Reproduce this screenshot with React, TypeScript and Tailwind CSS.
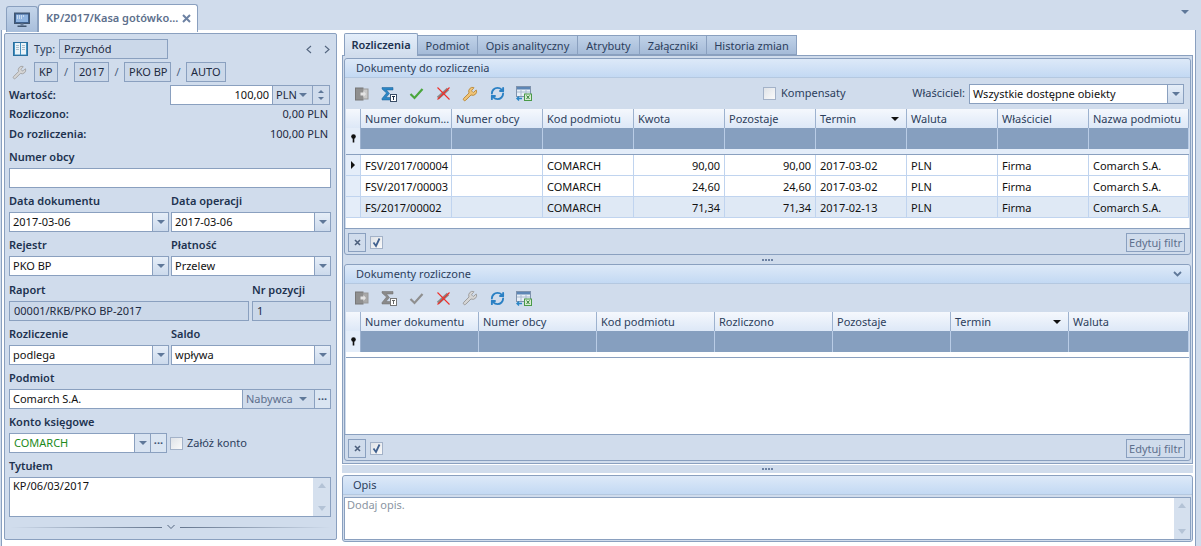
import React from 'react';
import { RefreshCw, Wrench } from 'lucide-react';

const Caret = ({ className = 'border-t-[#5f7899]' }: { className?: string }) => (
  <span className={`inline-block w-0 h-0 border-x-[4px] border-x-transparent border-t-[4px] ${className}`} />
);

const Label = ({ children, className = 'h-[24px] pt-[3px]' }: { children: React.ReactNode; className?: string }) => (
  <div className={`leading-[20px] font-semibold text-[#20324f] ${className}`}>{children}</div>
);

const RO = ({ children, className = '' }: { children: React.ReactNode; className?: string }) => (
  <div className={`h-[20px] border border-[#8aa0bf] px-[4px] leading-[18px] bg-[#cbd8e9] whitespace-nowrap ${className}`}>{children}</div>
);

const Combo = ({ value, className = '' }: { value: string; className?: string }) => (
  <div className={`h-[20px] flex border border-[#8aa0bf] bg-white ${className}`}>
    <div className="flex-1 px-[3px] leading-[18px] text-[#111]">{value}</div>
    <div className="w-[16px] border-l border-[#8aa0bf] bg-gradient-to-b from-[#e6eef8] to-[#ccdaec] flex items-center justify-center">
      <Caret />
    </div>
  </div>
);

const Dots = () => (
  <div className="flex gap-[1px] items-center justify-center">
    <span className="w-[2px] h-[2px] bg-[#6d82a3]" />
    <span className="w-[2px] h-[2px] bg-[#6d82a3]" />
    <span className="w-[2px] h-[2px] bg-[#6d82a3]" />
    <span className="w-[2px] h-[2px] bg-[#6d82a3]" />
  </div>
);

const Checkbox = ({ checked = false, className = '' }: { checked?: boolean; className?: string }) => (
  <span className={`w-[13px] h-[13px] border border-[#a3b2c8] bg-gradient-to-br from-[#dfe3e8] to-[#fafafa] flex items-center justify-center ${className}`}>
    {checked && (
      <svg width="11" height="11" viewBox="0 0 11 11">
        <path d="M2.5 5.5 L5 9 L8.5 1.5" fill="none" stroke="#41618f" strokeWidth="1.8" />
      </svg>
    )}
  </span>
);

const Monitor = () => (
  <svg width="16" height="16" viewBox="0 0 16 16">
    <rect x="0.5" y="1" width="15" height="10.5" fill="#3d5f8c" stroke="#42566f" />
    <rect x="2" y="2.5" width="12" height="7.5" fill="#8fb4e0" />
    <path d="M3 4h1M5 4h1M7 4h1M9 4h1M3 6h1M5 6h1M7 6h1" stroke="#fff" />
    <rect x="6.5" y="11.5" width="3" height="2" fill="#6a7f9c" />
    <rect x="3.5" y="13.5" width="9" height="1.5" fill="#42566f" />
  </svg>
);

const Book = () => (
  <svg width="15" height="14" viewBox="0 0 15 14">
    <rect x="0.5" y="0.5" width="14" height="13" fill="#3f8fc0" stroke="#2a6f9e" />
    <rect x="2" y="1" width="5" height="11.5" fill="#eaf3f8" />
    <rect x="8" y="1" width="5" height="11.5" fill="#eaf3f8" />
    <path d="M3 3.5h3M3 5.5h3M3 7.5h3M9 3.5h3M9 5.5h3M9 7.5h3" stroke="#a9bccb" />
  </svg>
);

const IconDoor = ({ off = false }: { off?: boolean }) => (
  <svg width="14" height="14" viewBox="0 0 14 14">
    <rect x="0.5" y="1" width="7.5" height="12" fill="#8f8f8f" stroke="#777" />
    <rect x="8" y="2" width="5" height="10" fill={off ? '#a9a9a9' : '#c9c9c9'} stroke="#999" />
    <path d="M5.5 5.5h3V4l2.5 3-2.5 3V8.5h-3z" fill="#e4e4e4" />
  </svg>
);

const IconSigma = ({ off = false }: { off?: boolean }) => (
  <svg width="16" height="16" viewBox="0 0 16 16">
    <path d="M1 1.5h11v2.5H5.5L8.5 7.5l-3.5 4h7v2.5H1v-1.5l4.5-5.5L1 3z" fill={off ? '#8a8a8a' : '#2b86c5'} stroke={off ? '#6e6e6e' : '#1c5f94'} strokeWidth="0.5" />
    <rect x="9.5" y="8.5" width="6" height="7" fill="#fff" stroke={off ? '#777' : '#3a4d66'} />
    <path d="M11 10.5h3M12.5 10.5v3.5" stroke={off ? '#666' : '#1c2f4a'} />
  </svg>
);

const IconCheck = ({ off = false }: { off?: boolean }) => (
  <svg width="15" height="13" viewBox="0 0 15 13">
    <path d="M1.5 7 L5.5 11 L13.5 2" fill="none" stroke={off ? '#8f8f8f' : '#4aa63c'} strokeWidth="2.2" />
  </svg>
);

const IconCross = () => (
  <svg width="15" height="15" viewBox="0 0 15 15">
    <path d="M2 12 L12 3" stroke="#8a8a8a" strokeWidth="3.4" />
    <path d="M1.5 1.5 L13.5 13.5 M13.5 1.5 L1.5 13.5" stroke="#ef2f2a" strokeWidth="1.1" />
  </svg>
);

const IconTable = () => (
  <svg width="16" height="15" viewBox="0 0 16 15">
    <rect x="0.5" y="0.5" width="14" height="10" fill="#e8eff7" stroke="#7f93ad" />
    <rect x="1" y="1" width="13" height="2.5" fill="#5d86b5" />
    <path d="M1 6h13M5 3v7M10 3v7" stroke="#a9bbd0" />
    <path d="M1 12.5h5M3 10.5l-2 2 2 2" fill="none" stroke="#2b86c5" strokeWidth="1.4" />
    <rect x="8.5" y="8" width="7" height="6.5" fill="#d7ecd2" stroke="#4a9a48" />
    <path d="M10.5 9.5l3 3.5M13.5 9.5l-3 3.5" stroke="#2e7d32" />
  </svg>
);

const Toolbar = ({ off = false, className = 'h-[31px]' }: { off?: boolean; className?: string }) => (
  <div className={`flex items-center gap-[11px] pl-[9px] shrink-0 ${className}`}>
    <span className="w-[16px] flex justify-center"><IconDoor off={off} /></span>
    <span className="w-[16px] flex justify-center"><IconSigma off={off} /></span>
    <span className="w-[16px] flex justify-center"><IconCheck off={off} /></span>
    <span className="w-[16px] flex justify-center"><IconCross /></span>
    <span className="w-[16px] flex justify-center">
      <Wrench size={16} strokeWidth={1.4} className={off ? 'text-[#9a9a9a] fill-[#d5d5d5]' : 'text-[#b98a3c] fill-[#efc376]'} />
    </span>
    <span className="w-[16px] flex justify-center">
      <RefreshCw size={15} strokeWidth={3} className="text-[#2a80c4]" />
    </span>
    <span className="w-[16px] flex justify-center"><IconTable /></span>
  </div>
);

const PanelHead = ({ title, chevron = false, className = 'pl-[11px]' }: { title: string; chevron?: boolean; className?: string }) => (
  <div className={`h-[19px] shrink-0 flex items-center justify-between pr-[8px] bg-gradient-to-b from-[#dde9f8] to-[#c3d9f3] border-b border-[#b4c8e0] rounded-t-[3px] text-[#2c3e5c] ${className}`}>
    <span>{title}</span>
    {chevron && (
      <svg width="9" height="7" viewBox="0 0 9 7">
        <path d="M1 1 L4.5 4.5 L8 1" fill="none" stroke="#5f7899" strokeWidth="1.8" />
      </svg>
    )}
  </div>
);

const Cell = ({ children, right = false, className = '' }: { children?: React.ReactNode; right?: boolean; className?: string }) => (
  <div className={`border-r border-b border-[#c0d4ef] px-[4px] leading-[21px] whitespace-nowrap overflow-hidden text-[#111] ${right ? 'text-right' : ''} ${className}`}>
    {children}
  </div>
);

const HeadCell = ({ children, sort = false }: { children?: React.ReactNode; sort?: boolean }) => (
  <div className="h-[19px] border-r border-[#9db2cf] px-[4px] leading-[18px] flex items-center justify-between text-[#2c3e5c] bg-gradient-to-b from-[#f5f8fd] to-[#dde8f7]">
    <span className="whitespace-nowrap">{children}</span>
    {sort && <Caret className="border-t-[#111] mr-[3px]" />}
  </div>
);

const FilterRow = ({ cols, className }: { cols: number; className: string }) => (
  <div className={`grid ${className} h-[21px] shrink-0`}>
    <div className="bg-[#e4edf9] border-r border-[#9db2cf] flex items-center justify-center">
      <svg width="7" height="9" viewBox="0 0 7 9">
        <circle cx="3.5" cy="2.5" r="2.3" fill="#111" />
        <rect x="2.7" y="3.5" width="1.6" height="5" fill="#111" />
      </svg>
    </div>
    {Array.from({ length: cols }).map((_, i) => (
      <div key={i} className="bg-[#869fbf] border-r border-[#b9cce6]" />
    ))}
  </div>
);

const GridFooter = () => (
  <div className="h-[26px] shrink-0 border-t border-[#8aa0bf] flex items-center justify-between pt-[1px] pl-[3px] pr-[5px]">
    <div className="flex items-center gap-[4px]">
      <div className="w-[18px] h-[19px] border border-[#8aa0bf] flex items-center justify-center">
        <svg width="7" height="7" viewBox="0 0 7 7">
          <path d="M1 1 L6 6 M6 1 L1 6" stroke="#4c5f7c" strokeWidth="1.6" />
        </svg>
      </div>
      <Checkbox checked />
    </div>
    <div className="h-[19px] w-[59px] border border-[#8aa0bf] text-center leading-[17px] text-[#5d6f8c] whitespace-nowrap">Edytuj filtr</div>
  </div>
);

const topCols = 'grid-cols-[15px_91px_91px_91px_91px_91px_91px_91px_91px_100px]';
const botCols = 'grid-cols-[15px_118px_118px_118px_118px_118px_118px_120px]';

const rows = [
  { doc: 'FSV/2017/00004', kw: '90,00', term: '2017-03-02', arrow: true, bg: 'bg-white' },
  { doc: 'FSV/2017/00003', kw: '24,60', term: '2017-03-02', arrow: false, bg: 'bg-white' },
  { doc: 'FS/2017/00002', kw: '71,34', term: '2017-02-13', arrow: false, bg: 'bg-[#dfe9f5]' },
];

const LeftPanel = () => (
  <div className="w-[333px] h-[507px] mt-[3px] ml-[1px] border border-[#8aa0bf] rounded-[2px] bg-[#d0dcec] px-[4px] text-[#1d2a3f]">
    <div className="h-[20px] mt-[5px] flex items-center">
      <span className="ml-[4px] w-[21px]"><Book /></span>
      <span className="text-[#2c3e5c] w-[25px]">Typ:</span>
      <RO className="w-[109px]">Przychód</RO>
      <div className="ml-auto mr-[2px] flex gap-[12px] items-center">
        <svg width="6" height="9" viewBox="0 0 6 9"><path d="M5 1 L1 4.5 L5 8" fill="none" stroke="#53657f" strokeWidth="1.1" /></svg>
        <svg width="6" height="9" viewBox="0 0 6 9"><path d="M1 1 L5 4.5 L1 8" fill="none" stroke="#53657f" strokeWidth="1.1" /></svg>
      </div>
    </div>
    <div className="h-[20px] mt-[3px] flex items-center">
      <span className="ml-[3px] w-[22px]">
        <Wrench size={15} strokeWidth={1.3} className="text-[#9a9a9a] fill-[#d5d5d5]" />
      </span>
      <RO className="w-[24px]">KP</RO>
      <span className="w-[16px] text-center text-[#4c5f7c]">/</span>
      <RO className="w-[35px]">2017</RO>
      <span className="w-[15px] text-center text-[#4c5f7c]">/</span>
      <RO className="w-[47px]">PKO BP</RO>
      <span className="w-[15px] text-center text-[#4c5f7c]">/</span>
      <RO className="w-[40px]">AUTO</RO>
    </div>
    <div className="h-[20px] mt-[3px] flex items-center">
      <span className="font-semibold text-[#20324f]">Wartość:</span>
      <div className="ml-auto mr-[2px] h-[20px] w-[160px] flex border border-[#8aa0bf] bg-white">
        <div className="w-[102px] text-right pr-[3px] leading-[18px] text-[#111] border-r border-[#8aa0bf]">100,00</div>
        <div className="flex-1 flex items-center justify-between pl-[3px] pr-[5px] bg-[#d0dcec] text-[#1d2a3f] border-r border-[#8aa0bf]">
          PLN <Caret />
        </div>
        <div className="w-[16px] bg-[#d0dcec] flex flex-col items-center justify-center gap-[4px]">
          <span className="w-0 h-0 border-x-[3px] border-x-transparent border-b-[3px] border-b-[#5f7899]" />
          <span className="w-0 h-0 border-x-[3px] border-x-transparent border-t-[3px] border-t-[#5f7899]" />
        </div>
      </div>
    </div>
    <div className="h-[19px] flex items-center justify-between pr-[4px]">
      <span className="font-semibold text-[#20324f]">Rozliczono:</span><span>0,00 PLN</span>
    </div>
    <div className="h-[20px] flex items-center justify-between pr-[4px]">
      <span className="font-semibold text-[#20324f]">Do rozliczenia:</span><span>100,00 PLN</span>
    </div>

    <Label>Numer obcy</Label>
    <div className="h-[20px] w-[322px] border border-[#8aa0bf] bg-white" />

    <div className="grid grid-cols-[160px_160px] gap-x-[2px]">
      <div><Label>Data dokumentu</Label><Combo value="2017-03-06" /></div>
      <div><Label>Data operacji</Label><Combo value="2017-03-06" /></div>
      <div><Label>Rejestr</Label><Combo value="PKO BP" /></div>
      <div><Label>Płatność</Label><Combo value="Przelew" /></div>
    </div>
    <div className="grid grid-cols-[240px_79px] gap-x-[3px]">
      <div><Label className="h-[25px] pt-[4px]">Raport</Label><RO className="px-[3px]">00001/RKB/PKO BP-2017</RO></div>
      <div><Label className="h-[25px] pt-[4px]">Nr pozycji</Label><RO className="px-[3px]">1</RO></div>
    </div>
    <div className="grid grid-cols-[160px_160px] gap-x-[2px]">
      <div><Label>Rozliczenie</Label><Combo value="podlega" /></div>
      <div><Label>Saldo</Label><Combo value="wpływa" /></div>
    </div>

    <Label>Podmiot</Label>
    <div className="h-[20px] flex border border-[#8aa0bf] bg-white w-[322px]">
      <div className="w-[232px] px-[3px] leading-[18px] text-[#111]">Comarch S.A.</div>
      <div className="w-[72px] border-l border-[#8aa0bf] bg-[#d0dcec] flex items-center justify-between pl-[3px] pr-[7px] text-[#5d6f8c]">
        Nabywca <Caret />
      </div>
      <div className="flex-1 border-l border-[#8aa0bf] bg-[#dae5f2] text-center leading-[12px] font-bold text-[#3f5272]">...</div>
    </div>

    <Label>Konto księgowe</Label>
    <div className="h-[20px] flex items-center">
      <div className="w-[158px] h-[20px] flex border border-[#8aa0bf] bg-white">
        <div className="flex-1 px-[4px] leading-[18px] text-[#1c8a1c]">COMARCH</div>
        <div className="w-[16px] border-l border-[#8aa0bf] bg-[#d8e3f1] flex items-center justify-center"><Caret /></div>
        <div className="w-[16px] border-l border-[#8aa0bf] bg-[#dae5f2] text-center leading-[12px] font-bold text-[#3f5272]">...</div>
      </div>
      <Checkbox className="ml-[3px]" />
      <span className="ml-[4px] text-[#2c3e5c]">Załóż konto</span>
    </div>

    <Label>Tytułem</Label>
    <div className="h-[40px] flex border border-[#8aa0bf] bg-white w-[322px]">
      <div className="flex-1 px-[3px] leading-[16px] text-[#111]">KP/06/03/2017</div>
      <div className="w-[17px] bg-[#d5e0ee] flex flex-col items-center justify-between py-[5px]">
        <span className="w-0 h-0 border-x-[4px] border-x-transparent border-b-[5px] border-b-[#b4c3d6]" />
        <span className="w-0 h-0 border-x-[4px] border-x-transparent border-t-[5px] border-t-[#b4c3d6]" />
      </div>
    </div>

    <div className="mt-[7px] flex items-center gap-[5px] pl-[1px] pr-[1px]">
      <div className="flex-1 h-[1px] bg-gradient-to-r from-[#d0dcec] to-[#66778f]" />
      <svg width="8" height="6" viewBox="0 0 8 6"><path d="M0.5 1 L4 4.5 L7.5 1" fill="none" stroke="#53657f" /></svg>
      <div className="flex-1 h-[1px] bg-gradient-to-r from-[#66778f] to-[#d0dcec]" />
    </div>
  </div>
);

const RightTabs = () => {
  const tabs = [
    ['Podmiot', 'w-[60px]'],
    ['Opis analityczny', 'w-[100px]'],
    ['Atrybuty', 'w-[62px]'],
    ['Załączniki', 'w-[67px]'],
    ['Historia zmian', 'w-[90px]'],
  ];
  return (
    <div className="h-[22px] mt-[3px] flex items-end pl-[2px] relative z-10">
      <div className="w-[74px] h-[23px] -mb-[1px] border border-b-0 border-[#8aa0bf] rounded-t-[2px] bg-gradient-to-b from-[#e4eefa] to-[#d0dcec] text-center leading-[22px] font-semibold text-[#20324f]">
        Rozliczenia
      </div>
      {tabs.map(([t, w]) => (
        <div key={t} className={`${w} h-[20px] border border-l-0 border-[#8aa0bf] bg-gradient-to-b from-[#c0d2e8] to-[#a5bbd8] text-center leading-[19px] text-[#2c3e5c]`}>
          {t}
        </div>
      ))}
    </div>
  );
};

const TopPanel = () => (
  <div className="h-[197px] shrink-0 border border-[#8aa0bf] rounded-[3px] bg-[#d0dcec] flex flex-col">
    <PanelHead title="Dokumenty do rozliczenia" />
    <div className="flex items-center">
      <Toolbar />
      <div className="ml-[231px] flex items-center gap-[5px] text-[#2c3e5c]">
        <Checkbox />
        Kompensaty
      </div>
      <div className="ml-auto mr-[6px] flex items-center gap-[4px] text-[#2c3e5c]">
        <span>Właściciel:</span>
        <Combo value="Wszystkie dostępne obiekty" className="w-[215px]" />
      </div>
    </div>
    <div className={`grid ${topCols} mx-[1px]`}>
      <HeadCell />
      <HeadCell>Numer dokum...</HeadCell>
      <HeadCell>Numer obcy</HeadCell>
      <HeadCell>Kod podmiotu</HeadCell>
      <HeadCell>Kwota</HeadCell>
      <HeadCell>Pozostaje</HeadCell>
      <HeadCell sort>Termin</HeadCell>
      <HeadCell>Waluta</HeadCell>
      <HeadCell>Właściciel</HeadCell>
      <HeadCell>Nazwa podmiotu</HeadCell>
    </div>
    <div className="mx-[1px]">
      <FilterRow cols={9} className={topCols} />
      <div className="h-[6px] bg-[#e4edf9] border-b border-[#8aa0bf]" />
    </div>
    <div className="mx-[1px] flex-1 bg-white">
      {rows.map((r) => (
        <div key={r.doc} className={`grid ${topCols} h-[21px] ${r.bg}`}>
          <Cell className="bg-[#e4edf9] flex items-center justify-center px-0">
            {r.arrow && <span className="w-0 h-0 border-y-[4px] border-y-transparent border-l-[4px] border-l-[#111]" />}
          </Cell>
          <Cell>{r.doc}</Cell>
          <Cell />
          <Cell>COMARCH</Cell>
          <Cell right>{r.kw}</Cell>
          <Cell right>{r.kw}</Cell>
          <Cell>{r.term}</Cell>
          <Cell>PLN</Cell>
          <Cell>Firma</Cell>
          <Cell>Comarch S.A.</Cell>
        </div>
      ))}
    </div>
    <GridFooter />
  </div>
);

const BottomPanel = () => (
  <div className="h-[197px] shrink-0 border border-[#8aa0bf] rounded-[3px] bg-[#d0dcec] flex flex-col">
    <PanelHead title="Dokumenty rozliczone" chevron />
    <Toolbar off className="h-[28px]" />
    <div className={`grid ${botCols} mx-[1px]`}>
      <HeadCell />
      <HeadCell>Numer dokumentu</HeadCell>
      <HeadCell>Numer obcy</HeadCell>
      <HeadCell>Kod podmiotu</HeadCell>
      <HeadCell>Rozliczono</HeadCell>
      <HeadCell>Pozostaje</HeadCell>
      <HeadCell sort>Termin</HeadCell>
      <HeadCell>Waluta</HeadCell>
    </div>
    <div className="mx-[1px] flex-1 flex flex-col bg-white">
      <FilterRow cols={7} className={botCols} />
      <div className="border-t border-[#8aa0bf] mt-[5px]" />
    </div>
    <GridFooter />
  </div>
);

const OpisPanel = () => (
  <div className="h-[67px] mt-[2px] border border-[#8aa0bf] rounded-[3px] bg-[#d0dcec] flex flex-col">
    <PanelHead title="Opis" className="pl-[10px]" />
    <div className="flex-1 m-[1px] mt-[2px] border border-[#8aa0bf] bg-white flex">
      <div className="flex-1 px-[2px] text-[#8b95a3] leading-[14px]">Dodaj opis.</div>
      <div className="w-[16px] bg-[#d5e0ee] flex flex-col items-center justify-between py-[5px]">
        <span className="w-0 h-0 border-x-[4px] border-x-transparent border-b-[5px] border-b-[#b4c3d6]" />
        <span className="w-0 h-0 border-x-[4px] border-x-transparent border-t-[5px] border-t-[#b4c3d6]" />
      </div>
    </div>
  </div>
);

export default function App() {
  return (
    <div className="w-[1201px] h-[546px] overflow-hidden flex flex-col bg-[#d0dcec] text-[11px] font-['Noto_Sans',sans-serif]">
      <div className="h-[30px] shrink-0 flex items-end pl-[6px] pr-[12px] relative z-10">
        <div className="w-[32px] h-[26px] -mb-[2px] border border-b-0 border-[#8aa0bf] rounded-t-[3px] bg-gradient-to-b from-[#c4d5ea] to-[#a8bedb] flex items-center justify-center">
          <Monitor />
        </div>
        <div className="w-[160px] h-[28px] -mb-[2px] border border-b-0 border-[#8aa0bf] rounded-t-[3px] bg-white flex items-center pl-[7px] pr-[6px] justify-between text-[#5d6f8c] font-semibold">
          <span className="whitespace-nowrap">KP/2017/Kasa gotówko...</span>
          <svg width="9" height="9" viewBox="0 0 9 9">
            <path d="M1 1 L8 8 M8 1 L1 8" stroke="#6d82a3" strokeWidth="2" />
          </svg>
        </div>
        <span className="ml-auto mb-[12px]"><Caret /></span>
      </div>
      <div className="flex-1 flex ml-[1px] mr-[5px] border-l border-r border-[#8aa0bf] bg-white pl-[1px] pr-[2px]">
        <LeftPanel />
        <div className="w-[851px] ml-[5px] flex flex-col">
          <RightTabs />
          <div className="h-[409px] shrink-0 border border-[#8aa0bf] bg-[#d0dcec] px-[1px] pt-[2px] flex flex-col">
            <TopPanel />
            <div className="h-[7px] my-[1px] flex items-center justify-center"><Dots /></div>
            <BottomPanel />
          </div>
          <div className="h-[8px] mt-[1px] flex items-center justify-center bg-[#d0dcec]"><Dots /></div>
          <OpisPanel />
        </div>
      </div>
    </div>
  );
}
